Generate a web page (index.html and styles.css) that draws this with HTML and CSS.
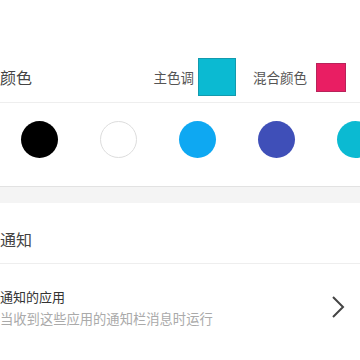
FILE: index.html
```html
<!DOCTYPE html>
<html lang="zh-CN">
<head>
    <meta charset="UTF-8">
    <meta name="viewport" content="width=device-width, initial-scale=1.0">
    <title>颜色设置</title>
    <link rel="stylesheet" href="styles.css">
</head>
<body>
    <div class="color-head">
        <span class="section-title">颜色</span>
        <div class="picks">
            <span class="pick-label">主色调</span>
            <span class="square square-main"></span>
            <span class="pick-label mix">混合颜色</span>
            <span class="square square-mix"></span>
        </div>
    </div>
    <div class="swatches">
        <span class="dot dot-black"></span>
        <span class="dot dot-white"></span>
        <span class="dot dot-blue"></span>
        <span class="dot dot-indigo"></span>
        <span class="dot dot-cyan"></span>
    </div>
    <div class="gap-band"></div>
    <div class="list-head">
        <span class="section-title">通知</span>
    </div>
    <div class="list-item">
        <div class="item-text">
            <div class="item-title">通知的应用</div>
            <div class="item-sub">当收到这些应用的通知栏消息时运行</div>
        </div>
        <svg class="chevron" width="14" height="24" viewBox="0 0 14 24">
            <polyline points="2,2 12,12 2,22" fill="none" stroke="#444" stroke-width="2" />
        </svg>
    </div>
</body>
</html>
```

FILE: styles.css
```css
body {
    margin: 0;
    font-family: "Noto Sans CJK SC", "Noto Sans", sans-serif;
    background-color: #fff;
    color: #444;
    overflow: hidden;
}
.color-head {
    display: flex;
    align-items: center;
    justify-content: space-between;
    height: 50px;
    padding-top: 52px;
    border-bottom: 1px solid #eee;
}
.section-title {
    font-size: 16px;
    line-height: 18px;
    color: #444;
}
.picks {
    display: flex;
    align-items: center;
    padding-right: 14px;
}
.pick-label {
    font-size: 13.5px;
    color: #555;
    margin-right: 4px;
}
.pick-label.mix {
    margin-left: 17px;
    margin-right: 9px;
}
.square {
    display: block;
    box-sizing: border-box;
}
.square-main {
    width: 38px;
    height: 38px;
    background-color: #0bbad2;
    border: 1px solid #139aad;
}
.square-mix {
    width: 30px;
    height: 29px;
    background-color: #e91e63;
    border: 1px solid #b8235a;
}
.swatches {
    display: flex;
    gap: 42px;
    padding: 18px 0 28px 21px;
    height: 37px;
}
.dot {
    flex: none;
    width: 37px;
    height: 37px;
    border-radius: 50%;
    box-sizing: border-box;
}
.dot-black {
    background-color: #000;
}
.dot-white {
    background-color: #fff;
    border: 1.5px solid #ddd;
}
.dot-blue {
    background-color: #0ea8f2;
}
.dot-indigo {
    background-color: #3f4fb8;
}
.dot-cyan {
    background-color: #0bbad2;
}
.gap-band {
    height: 16px;
    background-color: #f4f4f4;
    border-top: 1px solid #e2e2e2;
}
.list-head {
    padding: 24px 0 12px;
    border-bottom: 1px solid #eee;
}
.list-item {
    display: flex;
    align-items: flex-start;
    justify-content: space-between;
    height: 75px;
    padding: 24px 15px 0 0;
    border-bottom: 1px solid #ddd;
}
.item-text {
    display: flex;
    flex-direction: column;
    gap: 4px;
}
.item-title {
    font-size: 13px;
    line-height: 18px;
    color: #333;
}
.item-sub {
    font-size: 13.3px;
    line-height: 18px;
    color: #aaa;
}
.chevron {
    display: block;
    margin-top: 7px;
}
```
